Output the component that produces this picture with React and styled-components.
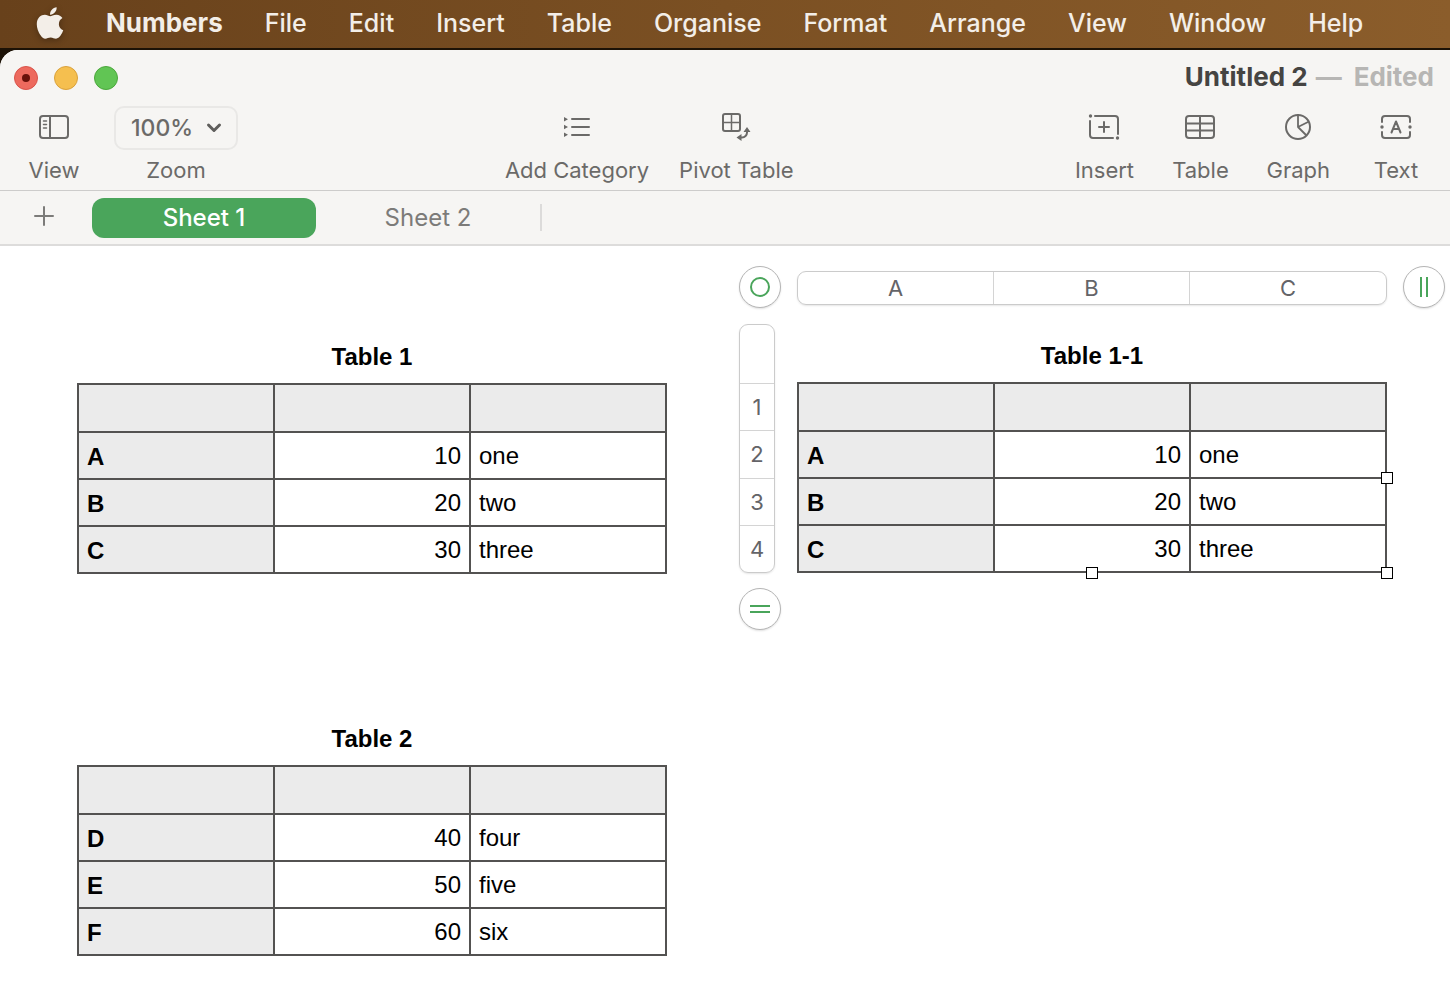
import React, { useState } from 'react'
import styled, { createGlobalStyle } from 'styled-components'
import { FaApple } from 'react-icons/fa'

const GlobalStyle = createGlobalStyle`
  * {
    box-sizing: border-box;
  }
  body {
    margin: 0;
    background: #fff;
    font-family: Inter, sans-serif;
  }
  button, select {
    margin: 0;
    padding: 0;
    border: 0;
    background: none;
    color: inherit;
    font: inherit;
  }
`

const Desktop = styled.div`
  display: flex;
  flex-direction: column;
  min-height: 100vh;
  background: #1c1206;
`

const MenuBar = styled.nav`
  display: flex;
  align-items: center;
  gap: 42px;
  height: 48px;
  padding: 0 36px 2px;
  margin-bottom: 2px;
  color: #f3eee8;
  background: linear-gradient(90deg, #68411b, #7b5023 50%, #8b5d2b);
  text-shadow: 0 2px 6px rgba(0, 0, 0, 0.35);
`

const MenuItem = styled.button`
  font-size: ${({ $bold }) => ($bold ? 26 : 25)}px;
  font-weight: ${({ $bold }) => ($bold ? 700 : 500)};
  line-height: 32px;
  white-space: nowrap;
`

const AppleButton = styled.button`
  display: flex;
  filter: drop-shadow(0 2px 3px rgba(0, 0, 0, 0.3));

  svg {
    width: 28px;
    height: 36px;
  }
`

const Window = styled.main`
  display: flex;
  flex: 1;
  flex-direction: column;
  overflow: hidden;
  background: #fff;
  border-radius: 18px 0 0 0;
`

const Chrome = styled.header`
  background: #f6f5f3;
  color: #6b6a68;
  border-bottom: 1px solid #cdcccb;
`

const TitleRow = styled.div`
  display: flex;
  align-items: center;
  gap: 16px;
  height: 56px;
  padding: 0 16px 0 14px;
`

const Light = styled.button`
  display: grid;
  place-items: center;
  width: 24px;
  height: 24px;
  border: 1px solid ${({ $edge }) => $edge};
  border-radius: 50%;
  background: ${({ $fill }) => $fill};
`

const UnsavedDot = styled.span`
  width: 8px;
  height: 8px;
  border-radius: 50%;
  background: #69110a;
`

const Title = styled.h1`
  display: flex;
  gap: 8px;
  margin: 0 0 0 auto;
  padding-bottom: 2px;
  color: #454442;
  font-size: 26px;
  font-weight: 700;
  line-height: 32px;

  span {
    color: #b7b6b4;
  }
  span + span {
    margin-left: 4px;
  }
`

const Toolbar = styled.div`
  display: flex;
  justify-content: space-between;
  padding: 0 24px 4px;
`

const ToolGroup = styled.div`
  display: flex;
  gap: ${({ $gap }) => $gap}px;
`

const MiddleTools = styled(ToolGroup)`
  margin-right: 14px;
`

const Tool = styled.button`
  display: flex;
  flex-direction: column;
  align-items: center;
  min-width: 60px;
`

const ToolIcon = styled.span`
  display: flex;
  align-items: center;
  height: 44px;
  padding-bottom: 2px;

  svg {
    fill: none;
    stroke: #6b6a68;
    stroke-width: 2;
    stroke-linecap: round;
    stroke-linejoin: round;
  }
  .solid {
    fill: #6b6a68;
    stroke: none;
  }
`

const toolText = `
  font-size: 22px;
  line-height: 28px;
  padding: 6px 0 2px;
  white-space: nowrap;
`

const ToolLabel = styled.span`
  ${toolText}
`

const ZoomTool = styled.div`
  display: flex;
  flex-direction: column;
  align-items: center;

  label {
    ${toolText}
  }
`

const ZoomBox = styled.div`
  display: flex;
  align-items: center;
  width: 124px;
  height: 44px;
  border: 2px solid #e9e8e6;
  border-radius: 10px;

  select {
    width: 100%;
    height: 40px;
    padding-left: 15px;
    appearance: none;
    font-size: 23px;
    font-weight: 500;
  }
  svg {
    flex: none;
    margin: 0 13px 0 -30px;
    pointer-events: none;
  }
`

const TabBar = styled.div`
  display: flex;
  align-items: center;
  height: 55px;
  background: #f6f5f3;
  border-bottom: 2px solid #dddcdb;
`

const AddSheet = styled.button`
  display: grid;
  place-items: center;
  width: 88px;
  height: 40px;
  padding-bottom: 3px;
  margin-right: 4px;
`

const Tab = styled.button`
  width: 224px;
  height: 40px;
  border-radius: 12px;
  font-size: 24px;
  font-weight: ${({ $active }) => ($active ? 500 : 400)};
  color: ${({ $active }) => ($active ? '#fff' : '#7c7b79')};
  background: ${({ $active }) => ($active ? '#4aa55b' : 'none')};
`

const TabDivider = styled.span`
  width: 2px;
  height: 27px;
  background: #dcdbda;
`

const Canvas = styled.div`
  display: flex;
  flex: 1;
  align-items: flex-start;
  gap: 71px;
  padding: 18px 4px 40px 77px;
`

const Column = styled.div`
  display: flex;
  flex-direction: column;
  gap: 133px;
  padding-top: 61px;
`

const DataTable = styled.table`
  width: 590px;
  table-layout: fixed;
  border-collapse: collapse;
  font-family: 'Liberation Sans', Arial, sans-serif;
  font-size: 24px;
  line-height: 28px;
  color: #000;

  caption {
    padding: 18px 0 12px;
    font-weight: 700;
  }
  th, td {
    height: 47px;
    padding: 0 8px;
    border: 2px solid #535251;
    text-align: left;
  }
  thead th {
    height: 48px;
  }
  th {
    padding-top: 2px;
    background: #ebebeb;
  }
`

const NumberCell = styled.td`
  && {
    text-align: right;
  }
`

const Selection = styled.section`
  display: grid;
  grid-template-columns: 44px 590px 44px;
  grid-template-rows: 45px auto 42px;
  gap: 15px;
  align-items: center;
`

const RoundButton = styled.button`
  display: grid;
  place-items: center;
  justify-self: center;
  width: 42px;
  height: 42px;
  border: 1px solid #b5b5b5;
  border-radius: 50%;
  background: #fff;
  box-shadow: 0 1px 2px rgba(0, 0, 0, 0.12);

  svg {
    fill: none;
    stroke: #4aa55b;
    stroke-width: 2;
  }
`

const ColumnBar = styled.div`
  display: grid;
  grid-template-columns: 195px 196px 1fr;
  height: 34px;
  margin-top: 3px;
  border: 1px solid #cbcbcb;
  border-radius: 9px;
  box-shadow: 0 1px 2px rgba(0, 0, 0, 0.1);

  button + button {
    border-left: 1px solid #d4d4d4;
  }
`

const RowBar = styled.div`
  display: grid;
  grid-template-rows: 58px repeat(4, 1fr);
  align-self: stretch;
  width: 36px;
  margin-left: 1px;
  border: 1px solid #cbcbcb;
  border-radius: 9px;
  box-shadow: 0 1px 2px rgba(0, 0, 0, 0.1);

  button {
    border-top: 1px solid #d4d4d4;
  }
`

const BarButton = styled.button`
  color: #646468;
  font-size: 22px;
  line-height: 28px;
`

const SelectedTable = styled.div`
  position: relative;
`

const Handle = styled.button`
  position: absolute;
  width: 12px;
  height: 12px;
  border: 1px solid #000;
  background: #fff;
  ${({ $at }) =>
    ({
      right: 'right: -6px; bottom: 89px;',
      corner: 'right: -6px; bottom: -6px;',
      bottom: 'left: 289px; bottom: -6px;',
    })[$at]}
`

const menus = ['File', 'Edit', 'Insert', 'Table', 'Organise', 'Format', 'Arrange', 'View', 'Window', 'Help']

const table1 = [
  ['A', 10, 'one'],
  ['B', 20, 'two'],
  ['C', 30, 'three'],
]

const table2 = [
  ['D', 40, 'four'],
  ['E', 50, 'five'],
  ['F', 60, 'six'],
]

const icons = {
  view: (
    <svg width="30" height="24" viewBox="0 0 30 24">
      <rect x="1" y="1" width="28" height="22" rx="3" />
      <path d="M11 1v22" />
      <path strokeWidth="1.5" d="M4.5 6h3M4.5 9.5h3M4.5 13h3" />
    </svg>
  ),
  category: (
    <svg width="28" height="22" viewBox="0 0 28 22">
      <path d="M9 3h17M9 11h17M9 19h17" />
      <path className="solid" d="M1 1v4.400l4-2.200zM1 8.800v4.400l4-2.200zM1 16.600v4.400l4-2.200z" />
    </svg>
  ),
  pivot: (
    <svg width="30" height="30" viewBox="0 0 30 30">
      <rect x="2" y="2" width="17" height="17" rx="2" />
      <path strokeWidth="1.5" d="M10.5 2v17M2 10.5h17" />
      <path d="M26 19v1.500a5 5 0 0 1-5 5h-2" />
      <path className="solid" d="M22.500 20l3.500-5 3.500 5zM20.500 22v7l-5-3.500z" />
    </svg>
  ),
  insert: (
    <svg width="32" height="26" viewBox="0 0 32 26">
      <path d="M7 2h20q3 0 3 3v15M25 24H5q-3 0-3-3V7" />
      <path d="M16 8v10M11 13h10" />
      <circle className="solid" cx="2.500" cy="2" r="1.700" />
      <circle className="solid" cx="29.500" cy="24" r="1.700" />
    </svg>
  ),
  table: (
    <svg width="30" height="24" viewBox="0 0 30 24">
      <rect x="1" y="1" width="28" height="22" rx="3" />
      <path d="M15 1v22M1 8.500h28M1 15.500h28" />
    </svg>
  ),
  graph: (
    <svg width="26" height="26" viewBox="0 0 26 26">
      <circle cx="13" cy="13" r="12" />
      <path strokeWidth="1.800" d="M13 1v12l10-5M13 13l8 8" />
    </svg>
  ),
  text: (
    <svg width="32" height="24" viewBox="0 0 32 24">
      <path d="M2 7V4q0-3 3-3h22q3 0 3 3v3M2 17v3q0 3 3 3h22q3 0 3-3v-3" />
      <path d="M11.500 17.500L16 6.500l4.500 11M13 14h6" />
      <circle className="solid" cx="2" cy="12" r="1.700" />
      <circle className="solid" cx="30" cy="12" r="1.700" />
    </svg>
  ),
}

function ToolButton({ icon, children }) {
  return (
    <Tool type="button">
      <ToolIcon>{icons[icon]}</ToolIcon>
      <ToolLabel>{children}</ToolLabel>
    </Tool>
  )
}

function SheetTable({ title, rows }) {
  return (
    <DataTable>
      <caption>{title}</caption>
      <thead>
        <tr>
          <th />
          <th />
          <th />
        </tr>
      </thead>
      <tbody>
        {rows.map(([name, amount, word]) => (
          <tr key={name}>
            <th scope="row">{name}</th>
            <NumberCell>{amount}</NumberCell>
            <td>{word}</td>
          </tr>
        ))}
      </tbody>
    </DataTable>
  )
}

export default function App() {
  const [sheet, setSheet] = useState('Sheet 1')

  return (
    <Desktop>
      <GlobalStyle />
      <MenuBar>
        <AppleButton type="button" aria-label="Apple menu">
          <FaApple />
        </AppleButton>
        <MenuItem type="button" $bold>Numbers</MenuItem>
        {menus.map((name) => (
          <MenuItem type="button" key={name}>{name}</MenuItem>
        ))}
      </MenuBar>

      <Window>
        <Chrome>
          <TitleRow>
            <Light type="button" aria-label="Close" $fill="#ed6a5e" $edge="#d9534a">
              <UnsavedDot />
            </Light>
            <Light type="button" aria-label="Minimise" $fill="#f5bf4f" $edge="#d9a13c" />
            <Light type="button" aria-label="Full screen" $fill="#61c554" $edge="#4ba73c" />
            <Title>
              Untitled 2 <span>—</span> <span>Edited</span>
            </Title>
          </TitleRow>
          <Toolbar>
            <ToolGroup $gap={30}>
              <ToolButton icon="view">View</ToolButton>
              <ZoomTool>
                <ZoomBox>
                  <select id="zoom" defaultValue="100%">
                    <option>50%</option>
                    <option>100%</option>
                    <option>200%</option>
                  </select>
                  <svg width="16" height="12" viewBox="0 0 16 12" fill="none" stroke="#5f5e5c" strokeWidth="3" strokeLinecap="round" strokeLinejoin="round">
                    <path d="M2.500 3L8 8.500 13.500 3" />
                  </svg>
                </ZoomBox>
                <label htmlFor="zoom">Zoom</label>
              </ZoomTool>
            </ToolGroup>
            <MiddleTools $gap={30}>
              <ToolButton icon="category">Add Category</ToolButton>
              <ToolButton icon="pivot">Pivot Table</ToolButton>
            </MiddleTools>
            <ToolGroup $gap={36}>
              <ToolButton icon="insert">Insert</ToolButton>
              <ToolButton icon="table">Table</ToolButton>
              <ToolButton icon="graph">Graph</ToolButton>
              <ToolButton icon="text">Text</ToolButton>
            </ToolGroup>
          </Toolbar>
        </Chrome>

        <TabBar>
          <AddSheet type="button" aria-label="Add sheet">
            <svg width="20" height="20" viewBox="0 0 20 20" stroke="#7c7b79" strokeWidth="2" strokeLinecap="round">
              <path d="M10 1v18M1 10h18" />
            </svg>
          </AddSheet>
          {['Sheet 1', 'Sheet 2'].map((name) => (
            <Tab type="button" key={name} $active={sheet === name} onClick={() => setSheet(name)}>
              {name}
            </Tab>
          ))}
          <TabDivider />
        </TabBar>

        <Canvas>
          <Column>
            <SheetTable title="Table 1" rows={table1} />
            <SheetTable title="Table 2" rows={table2} />
          </Column>

          <Selection>
            <RoundButton type="button" aria-label="Select table">
              <svg width="20" height="20" viewBox="0 0 20 20">
                <circle cx="10" cy="10" r="9" />
              </svg>
            </RoundButton>
            <ColumnBar>
              {['A', 'B', 'C'].map((name) => (
                <BarButton type="button" key={name}>{name}</BarButton>
              ))}
            </ColumnBar>
            <RoundButton type="button" aria-label="Add columns">
              <svg width="20" height="20" viewBox="0 0 20 20">
                <path d="M7 0v20M13 0v20" />
              </svg>
            </RoundButton>
            <RowBar>
              <span />
              {[1, 2, 3, 4].map((row) => (
                <BarButton type="button" key={row}>{row}</BarButton>
              ))}
            </RowBar>
            <SelectedTable>
              <SheetTable title="Table 1-1" rows={table1} />
              <Handle type="button" aria-label="Resize columns" $at="right" />
              <Handle type="button" aria-label="Resize table" $at="corner" />
              <Handle type="button" aria-label="Resize rows" $at="bottom" />
            </SelectedTable>
            <span />
            <RoundButton type="button" aria-label="Add rows">
              <svg width="20" height="20" viewBox="0 0 20 20">
                <path d="M0 7h20M0 13h20" />
              </svg>
            </RoundButton>
          </Selection>
        </Canvas>
      </Window>
    </Desktop>
  )
}
